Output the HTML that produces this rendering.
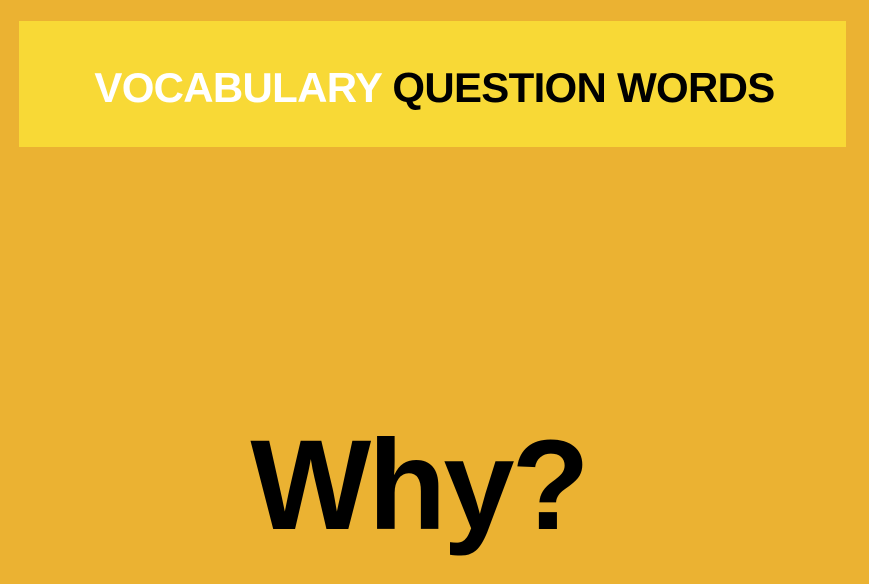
<!DOCTYPE html>
<html><head><style>
html,body{margin:0;padding:0;}
body{width:869px;height:584px;background:#ebb232;position:relative;overflow:hidden;font-family:"Liberation Sans",sans-serif;}
.banner{position:absolute;left:19px;top:21px;width:827px;height:126px;background:#f8d936;}
.h{position:absolute;left:0;right:0;top:67px;text-align:center;font-weight:bold;font-size:42px;line-height:42px;letter-spacing:-0.7px;white-space:nowrap;}
.h .w{color:#fff;}
.h .b{color:#000;}
.why{position:absolute;left:0;width:869px;top:416px;text-align:center;font-weight:bold;font-size:128px;line-height:140px;letter-spacing:-3px;color:#000;padding-right:32px;box-sizing:border-box;}
</style></head><body>
<div class="banner"></div>
<div class="h"><span class="w">VOCABULARY</span> <span class="b">QUESTION WORDS</span></div>
<div class="why">Why?</div>
</body></html>
